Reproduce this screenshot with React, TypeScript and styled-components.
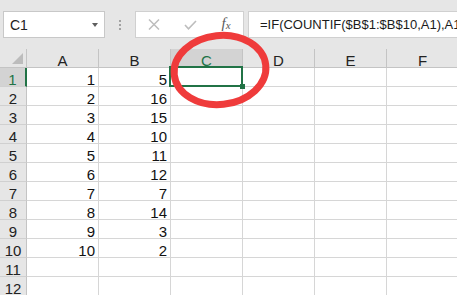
import React from "react";
import styled, { createGlobalStyle } from "styled-components";

const GlobalStyle = createGlobalStyle`
  html, body { margin: 0; padding: 0; background: #e6e6e6; overflow: hidden; }
  * { box-sizing: border-box; }
`;

const Frame = styled.div`
  position: relative;
  width: 457px;
  height: 295px;
  overflow: hidden;
  background: #e6e6e6;
  font-family: "Liberation Sans", Arial, sans-serif;
  color: #1b1b1b;
`;

const Toolbar = styled.div`
  height: 49px;
  display: flex;
  align-items: flex-start;
  padding: 11px 0 0 3px;
`;

const NameBox = styled.div`
  width: 102px;
  height: 27px;
  flex: none;
  background: #fff;
  border: 1px solid #c8c8c8;
  display: flex;
  align-items: center;
  justify-content: space-between;
  padding: 0 6px 0 6px;
  font-size: 14px;
  color: #222;
`;

const Caret = styled.span`
  width: 0;
  height: 0;
  border-left: 3.5px solid transparent;
  border-right: 3.5px solid transparent;
  border-top: 4px solid #5e5e5e;
  margin-top: 1px;
`;

const Grip = styled.div`
  width: 30px;
  height: 27px;
  flex: none;
  display: flex;
  flex-direction: column;
  align-items: center;
  justify-content: center;
  gap: 2px;
  & > span {
    width: 2px;
    height: 2px;
    background: #a2a2a2;
  }
`;

const FuncBox = styled.div`
  width: 109px;
  height: 27px;
  flex: none;
  background: #fff;
  border: 1px solid #d0d0d0;
  display: grid;
  grid-template-columns: repeat(3, 36px);
  align-items: center;
  justify-items: center;
`;

const Fx = styled.span`
  font-family: "Liberation Serif", "Times New Roman", serif;
  font-style: italic;
  font-size: 15px;
  color: #5a5a5a;
  line-height: 1;
  margin-top: -2px;
  & > sub {
    font-size: 11px;
    vertical-align: -1px;
  }
`;

const FormulaInput = styled.div`
  margin-left: 4px;
  flex: 1;
  min-width: 0;
  height: 27px;
  background: #fff;
  border: 1px solid #d0d0d0;
  border-right: none;
  display: flex;
  align-items: center;
  padding-left: 11px;
  font-size: 13px;
  white-space: nowrap;
  overflow: hidden;
  color: #1b1b1b;
`;

const Sheet = styled.div`
  display: grid;
  grid-template-columns: 27px repeat(6, 72px);
  grid-auto-rows: 19px;
`;

const Corner = styled.div`
  background: #e6e6e6;
  border-right: 1px solid #c4c4c4;
  border-bottom: 1px solid #c4c4c4;
  position: relative;
  &::after {
    content: "";
    position: absolute;
    right: 3px;
    bottom: 3px;
    width: 0;
    height: 0;
    border-left: 11px solid transparent;
    border-bottom: 11px solid #bcbcbc;
  }
`;

const ColHead = styled.div<{ $active?: boolean }>`
  background: ${(p) => (p.$active ? "#d3d3d3" : "#e6e6e6")};
  color: ${(p) => (p.$active ? "#217346" : "#222")};
  border-right: 1px solid #c4c4c4;
  border-bottom: 1px solid #c4c4c4;
  display: flex;
  align-items: flex-end;
  justify-content: center;
  font-size: 15px;
  line-height: 13px;
`;

const RowHead = styled.div<{ $active?: boolean }>`
  background: ${(p) => (p.$active ? "#d3d3d3" : "#e6e6e6")};
  color: ${(p) => (p.$active ? "#217346" : "#222")};
  border-right: ${(p) => (p.$active ? "2px solid #217346" : "1px solid #c4c4c4")};
  border-bottom: 1px solid #d0d0d0;
  display: flex;
  align-items: flex-end;
  justify-content: center;
  font-size: 15px;
  line-height: 13px;
`;

const Cell = styled.div<{ $selected?: boolean }>`
  position: relative;
  background: #fff;
  border-right: 1px solid #d6d6d6;
  border-bottom: 1px solid #d6d6d6;
  display: flex;
  align-items: flex-end;
  justify-content: flex-end;
  padding-right: 3px;
  font-size: 15px;
  line-height: 13px;
  color: #111;
  ${(p) =>
    p.$selected &&
    `
    z-index: 2;
    &::before {
      content: "";
      position: absolute;
      left: -2px;
      top: -2px;
      width: 74px;
      height: 21px;
      border: 2px solid #217346;
      box-sizing: border-box;
    }
    &::after {
      content: "";
      position: absolute;
      left: 69px;
      top: 16px;
      width: 5px;
      height: 5px;
      background: #217346;
    }
  `}
`;

const Annotation = styled.svg`
  position: absolute;
  left: 0;
  top: 0;
  pointer-events: none;
  z-index: 5;
`;

const colsA = [1, 2, 3, 4, 5, 6, 7, 8, 9, 10];
const colsB = [5, 16, 15, 10, 11, 12, 7, 14, 3, 2];
const letters = ["A", "B", "C", "D", "E", "F"];

export default function App() {
  const rows = Array.from({ length: 12 }, (_, i) => i + 1);
  return (
    <Frame>
      <GlobalStyle />
      <Toolbar>
        <NameBox>
          <span>C1</span>
          <Caret />
        </NameBox>
        <Grip>
          <span />
          <span />
          <span />
        </Grip>
        <FuncBox>
          <svg width="12" height="11" viewBox="0 0 12 11">
            <path d="M1 0.5 L11 10.5 M11 0.5 L1 10.5" stroke="#bdbdbd" strokeWidth="1.5" fill="none" />
          </svg>
          <svg width="13" height="10" viewBox="0 0 13 10">
            <path d="M1 5 L4.5 8.8 L12 1" stroke="#bdbdbd" strokeWidth="1.6" fill="none" />
          </svg>
          <Fx>
            f<sub>x</sub>
          </Fx>
        </FuncBox>
        <FormulaInput>=IF(COUNTIF($B$1:$B$10,A1),A1</FormulaInput>
      </Toolbar>
      <Sheet>
        <Corner />
        {letters.map((l) => (
          <ColHead key={l} $active={l === "C"}>
            {l}
          </ColHead>
        ))}
        {rows.map((r) => (
          <React.Fragment key={r}>
            <RowHead $active={r === 1}>{r}</RowHead>
            <Cell>{colsA[r - 1] ?? ""}</Cell>
            <Cell>{colsB[r - 1] ?? ""}</Cell>
            <Cell $selected={r === 1} />
            <Cell />
            <Cell />
            <Cell />
          </React.Fragment>
        ))}
      </Sheet>
      <Annotation width="457" height="295" viewBox="0 0 457 295">
        <ellipse
          cx="220"
          cy="70"
          rx="46"
          ry="34.5"
          transform="rotate(-6 220 70)"
          fill="none"
          stroke="#ef3b3b"
          strokeWidth="7"
        />
      </Annotation>
    </Frame>
  );
}
